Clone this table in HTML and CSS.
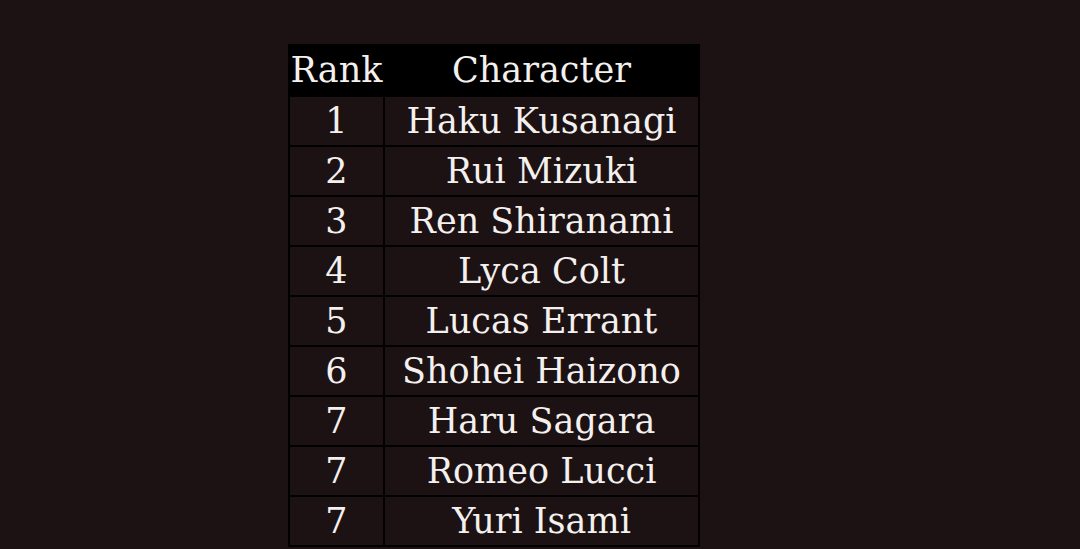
FILE: index.html
```html
<!DOCTYPE html>
<html>
<head>
<meta charset="utf-8">
<link rel="stylesheet" href="styles.css">
</head>
<body>
<div class="page">
  <table class="rank-table">
    <thead>
      <tr><th class="col-rank">Rank</th><th class="col-name">Character</th></tr>
    </thead>
    <tbody>
      <tr><td>1</td><td>Haku Kusanagi</td></tr>
      <tr><td>2</td><td>Rui Mizuki</td></tr>
      <tr><td>3</td><td>Ren Shiranami</td></tr>
      <tr><td>4</td><td>Lyca Colt</td></tr>
      <tr><td>5</td><td>Lucas Errant</td></tr>
      <tr><td>6</td><td>Shohei Haizono</td></tr>
      <tr><td>7</td><td>Haru Sagara</td></tr>
      <tr><td>7</td><td>Romeo Lucci</td></tr>
      <tr><td>7</td><td>Yuri Isami</td></tr>
    </tbody>
  </table>
</div>
</body>
</html>
```

FILE: styles.css
```css
html, body {
  margin: 0;
  padding: 0;
  background: #1c1214;
}
.page {
  width: 1080px;
  height: 549px;
  overflow: hidden;
  padding-top: 44px;
  padding-left: 288px;
  box-sizing: border-box;
}
.rank-table {
  border-collapse: collapse;
  font-family: "DejaVu Serif", "Liberation Serif", serif;
  font-size: 35px;
  color: #f4f0ee;
  background: #1c1214;
}
.rank-table th,
.rank-table td {
  border: 2px solid #000;
  text-align: center;
  padding: 0;
  height: 48px;
  font-weight: normal;
  line-height: 1;
}
.rank-table thead th {
  background: #000;
  height: 49px;
}
.col-rank { width: 93px; }
.col-name { width: 313px; }
```
